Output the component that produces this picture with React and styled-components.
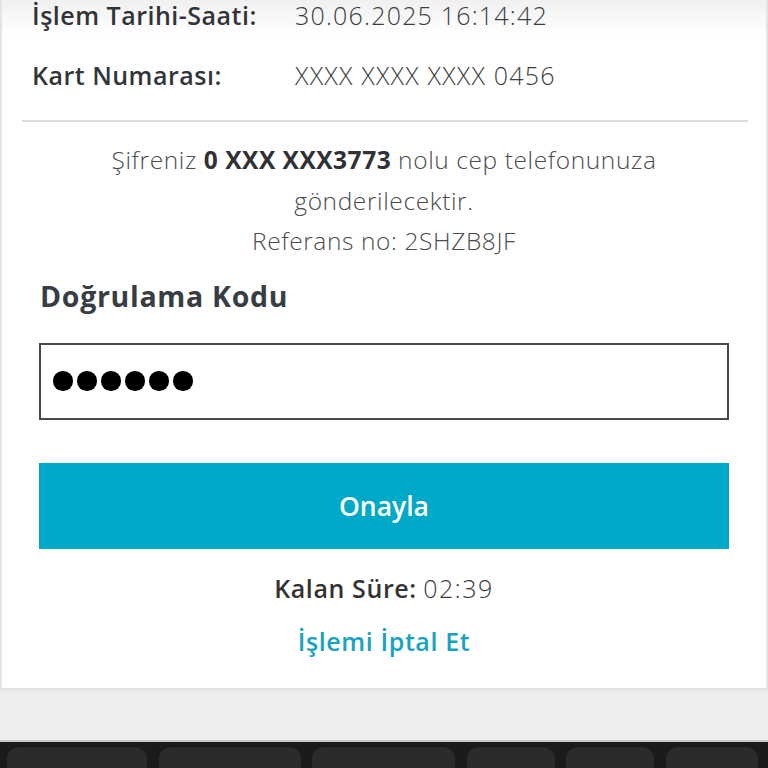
import React from "react";
import styled, { createGlobalStyle } from "styled-components";

const Global = createGlobalStyle`
  html, body { margin: 0; padding: 0; background: #eeeeee; }
  body { font-family: "Open Sans", "Noto Sans", sans-serif; overflow: hidden; }
  #root { height: 768px; }
`;

const Page = styled.div`
  display: flex;
  flex-direction: column;
  height: 768px;
  overflow: hidden;
`;

const Card = styled.div`
  flex-shrink: 0;
  background: #ffffff;
  border-left: 2px solid #e4e4e4;
  border-right: 2px solid #e4e4e4;
  box-shadow: 0 2px 3px rgba(0, 0, 0, 0.08);
  height: 688px;
  box-sizing: border-box;
  display: flex;
  flex-direction: column;
  overflow: hidden;
  position: relative;
  &::before {
    content: "";
    position: absolute;
    left: 0;
    right: 0;
    top: 0;
    height: 34px;
    background: linear-gradient(to bottom, rgba(0,0,0,0.06), rgba(0,0,0,0));
    pointer-events: none;
  }
`;

const Details = styled.div`
  margin-top: -15px;
  padding: 0 20px 15px 30px;
  display: flex;
  flex-direction: column;
`;

const Row = styled.div`
  display: grid;
  grid-template-columns: 263px 1fr;
  align-items: center;
  height: 60px;
  white-space: nowrap;
`;

const Label = styled.span`
  font-weight: 600;
  font-size: 25px;
  letter-spacing: 0.5px;
  color: #333639;
`;

const Value = styled.span`
  font-weight: 300;
  font-size: 25px;
  letter-spacing: 1.2px;
  color: #3d3f42;
`;

const Divider = styled.hr`
  margin: 0 18px 0 20px;
  border: none;
  border-top: 2px solid #dcdcdc;
`;

const Message = styled.p`
  margin: 18px 0 0;
  text-align: center;
  font-size: 24.5px;
  line-height: 40.5px;
  color: #4a4c4f;
  font-weight: 300;
  letter-spacing: 0.6px;
  padding: 0 70px;
  b { font-weight: 700; color: #2f3134; letter-spacing: 0.5px; }
`;

const Form = styled.div`
  padding: 0 37px 0 37px;
  display: flex;
  flex-direction: column;
`;

const FieldTitle = styled.h2`
  margin: 14px 0 0 1px;
  font-size: 28.5px;
  font-weight: 700;
  letter-spacing: 0.7px;
  line-height: 40px;
  color: #383d43;
`;

const InputBox = styled.div`
  margin-top: 27px;
  height: 73px;
  border: 2px solid #4a4a4a;
  display: flex;
  align-items: center;
  gap: 4.5px;
  padding-left: 12px;
`;

const Dot = styled.span`
  width: 19.5px;
  height: 19.5px;
  border-radius: 50%;
  background: #000;
  display: block;
`;

const Button = styled.button`
  margin-top: 43px;
  height: 86px;
  border: none;
  background: #00a9c7;
  color: #ffffff;
  font-family: inherit;
  font-size: 26.5px;
  font-weight: 600;
`;

const Remaining = styled.div`
  margin-top: 21px;
  text-align: center;
  font-size: 25px;
  line-height: 36px;
  color: #3a3c3f;
  b { font-weight: 600; color: #333; letter-spacing: 0.6px; }
  span { font-weight: 300; letter-spacing: 1.5px; }
`;

const CancelLink = styled.a`
  margin-top: 17px;
  text-align: center;
  font-size: 25px;
  font-weight: 600;
  letter-spacing: 0.6px;
  color: #17a3be;
  line-height: 36px;
  text-decoration: none;
`;

const Spacer = styled.div`
  flex-shrink: 0;
  height: 52px;
  background: #eeeeee;
  border-bottom: 2px solid #c9c9c9;
`;

const Keyboard = styled.div`
  flex: 1;
  background: #1b1b1b;
  display: flex;
  gap: 11.5px;
  padding: 5px 8px 0 7px;
`;

const Key = styled.div`
  flex-shrink: 0;
  width: ${(p) => p.w}px;
  height: 40px;
  background: #2b2b2b;
  border-radius: 12px;
`;

export default function App() {
  return (
    <Page>
      <Global />
      <Card>
        <Details>
          <Row>
            <Label>İşlem Tarihi-Saati:</Label>
            <Value>30.06.2025 16:14:42</Value>
          </Row>
          <Row>
            <Label>Kart Numarası:</Label>
            <Value>XXXX XXXX XXXX 0456</Value>
          </Row>
        </Details>
        <Divider />
        <Message>
          Şifreniz <b>0 XXX XXX3773</b> nolu cep telefonunuza gönderilecektir.
          <br />
          Referans no: 2SHZB8JF
        </Message>
        <Form>
          <FieldTitle>Doğrulama Kodu</FieldTitle>
          <InputBox>
            {Array.from({ length: 6 }).map((_, i) => (
              <Dot key={i} />
            ))}
          </InputBox>
          <Button>Onayla</Button>
          <Remaining>
            <b>Kalan Süre:</b> <span>02:39</span>
          </Remaining>
          <CancelLink href="#">İşlemi İptal Et</CancelLink>
        </Form>
      </Card>
      <Spacer />
      <Keyboard>
        <Key w={140} />
        <Key w={142} />
        <Key w={143} />
        <Key w={88} />
        <Key w={88} />
        <Key w={92} />
      </Keyboard>
    </Page>
  );
}
